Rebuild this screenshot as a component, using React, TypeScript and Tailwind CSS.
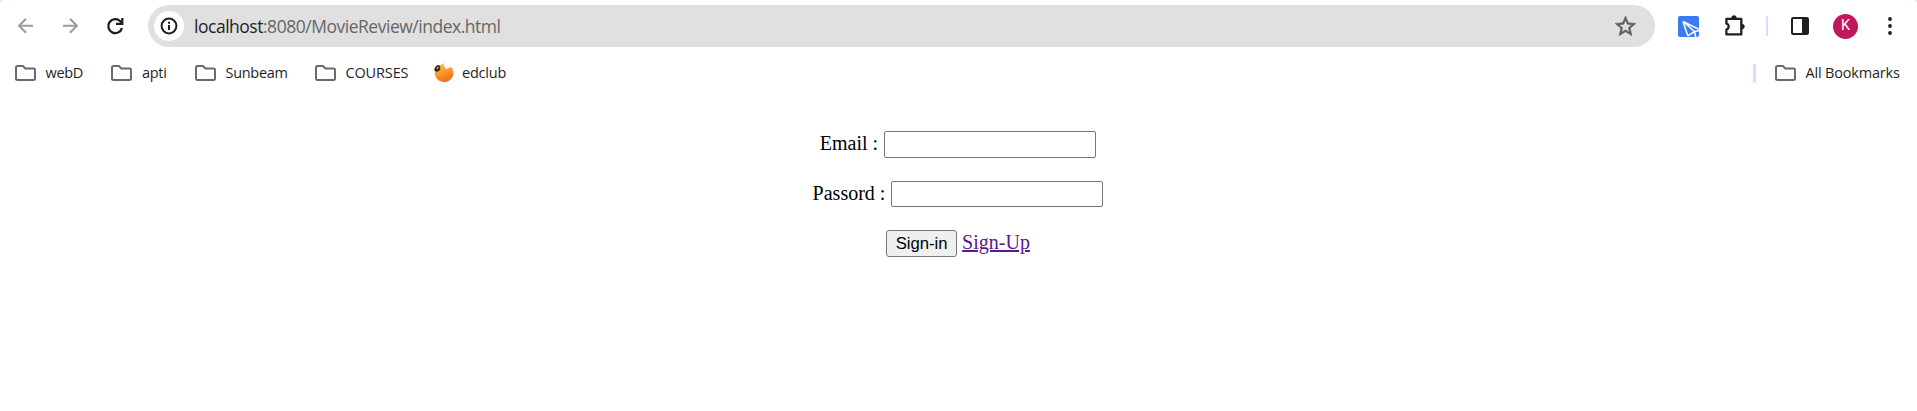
import type { ReactNode } from "react";

function FolderIcon() {
  return (
    <svg className="block h-4 w-[21px] shrink-0" viewBox="0 0 21 16" fill="none" stroke="#6a6a6d" strokeWidth="2" strokeLinejoin="round">
      <path d="M2.5 1H8l2.3 2.6h8.2A1.5 1.5 0 0 1 20 5.1v8.4a1.5 1.5 0 0 1-1.5 1.5h-16A1.5 1.5 0 0 1 1 13.5v-11A1.5 1.5 0 0 1 2.5 1Z" />
    </svg>
  );
}

function FoxIcon() {
  return (
    <svg className="block h-5 w-5 shrink-0" viewBox="0 0 20 20">
      <defs>
        <linearGradient id="fox" x1="0.2" y1="0" x2="0.6" y2="1">
          <stop offset="0" stopColor="#ffc247" />
          <stop offset="0.5" stopColor="#fb9a28" />
          <stop offset="1" stopColor="#ee6a20" />
        </linearGradient>
      </defs>
      <path d="M.2 6.5C1 3.5 3.6 1.9 6.4 2L10.4.2 9.6 3.2c1.2.4 1.6 1.200 1.800 2.300 1.700.6 3 .2 3.700-.8l.8-1.200.9 1.500 2-.2-.3 2.200 1 1.500c.3 6-3.700 10.600-9.300 10.600-5.400 0-9-3.600-9.600-9l.6-1.600Z" fill="url(#fox)" />
      <path d="M.3 7.2C.6 4.8 1.9 2.6 4 2.1c1.8.4 2.6 1.9 2.200 3.800C5.700 7.700 4 9 1.800 8.600Z" fill="#3d2814" />
      <path d="M2.700 4.500c1-.8 1.800-.5 1.900.5-.3.9-1.200 1-1.900.5Z" fill="#d8cba6" />
    </svg>
  );
}

function Bookmark({ className, icon, children }: { className: string; icon: ReactNode; children: ReactNode }) {
  return (
    <div className={`flex shrink-0 items-center whitespace-nowrap ${className}`}>
      {icon}
      {children}
    </div>
  );
}

function Toolbar() {
  return (
    <div className="flex h-[52px] items-center pl-[14px] text-[#1f1f1f]">
      <svg className="block h-6 w-6 shrink-0" viewBox="0 0 24 24" fill="none" stroke="#9b9b9b" strokeWidth="2">
        <path d="M19 11.7H5M12 4.7l-7 7 7 7" />
      </svg>
      <svg className="ml-[21px] block h-6 w-6 shrink-0" viewBox="0 0 24 24" fill="none" stroke="#9b9b9b" strokeWidth="2">
        <path d="M4 11.7h14M11 4.7l7 7-7 7" />
      </svg>
      <svg className="ml-[20px] block h-6 w-6 shrink-0" viewBox="0.5 0 24 24" fill="none" stroke="#1f1f22" strokeWidth="2.3">
        <path d="M19.500 14.100A7 7 0 1 1 17.800 7.200l1.700 1.900" />
        <path d="M19.800 4v5.800H13.500" />
      </svg>
      <div className="ml-[21px] flex h-[42px] w-[1507px] shrink-0 items-center rounded-full bg-[#e0e0e0] pl-[6px] pr-[17px]">
        <div className="flex h-[30px] w-[30px] items-center justify-center rounded-full bg-white">
          <svg className="block h-[18px] w-[18px]" viewBox="0 0 18 18" fill="none" stroke="#1f1f22" strokeWidth="2">
            <circle cx="9" cy="9" r="7.4" />
            <path d="M9 8v5M9 4.8v2" />
          </svg>
        </div>
        <div className="ml-[10px] whitespace-nowrap font-['Open_Sans',sans-serif] text-[17.5px] leading-6 tracking-[-0.48px] text-[#666]">
          <span className="text-[#1f1f1f]">localhost</span>:8080/MovieReview/index.html
        </div>
        <svg className="ml-auto block h-[25px] w-[25px]" viewBox="0 0.2 24 24" fill="#5f5f62">
          <path d="M22 9.240l-7.190-.62L12 2 9.190 8.630 2 9.240l5.460 4.730L5.820 21 12 17.270 18.180 21l-1.630-7.030L22 9.240zM12 15.400l-3.760 2.270 1-4.280-3.320-2.880 4.380-.38L12 6.100l1.710 4.040 4.380.38-3.320 2.880 1 4.280L12 15.400z" stroke="#5f5f62" strokeWidth="0.500" />
        </svg>
      </div>
      <svg className="ml-[23px] block h-[21px] w-[21px] shrink-0" viewBox="0 0 21 21">
        <rect width="21" height="21" rx="2" fill="#3d7bf0" />
        <path d="M5 5.500 21 13.300M5 5.500l4.800 14.300M5 5.500 16.500 15.500M9.800 19.800l6.700-4.300 4.500-.8M16.500 15.500l1.200 5.500" fill="none" stroke="#fff" strokeWidth="1.5" />
      </svg>
      <svg className="ml-[24px] block h-6 w-6 shrink-0" viewBox="0 0 24 24" fill="none" stroke="#1f1f22">
        <path d="M3.400 4.900h14.900v15.500H3.400v-4.700c3-1.100 3-5.100 0-6.200Z" strokeWidth="2.300" strokeLinejoin="round" />
        <path d="M8.600 4a2.400 2.400 0 0 1 4.800 0ZM19.100 10.200a2.400 2.400 0 0 1 0 4.800Z" fill="#1f1f22" strokeWidth="0.5" />
      </svg>
      <div className="ml-[19px] h-5 w-[2px] shrink-0 rounded-full bg-[#e5d5fd]" />
      <svg className="ml-[23px] block h-[18px] w-[18px] shrink-0" viewBox="0 0 18 18">
        <rect x="1" y="1" width="16" height="16" rx="1.2" fill="none" stroke="#1f1f22" strokeWidth="2" />
        <path d="M11 1h6v16h-6Z" fill="#1f1f22" />
      </svg>
      <div className="ml-[24px] flex h-[25px] w-[25px] shrink-0 items-center justify-center rounded-full bg-[#c2185b] font-['Roboto',sans-serif] text-[14.5px] leading-none text-white">
        K
      </div>
      <svg className="ml-[30px] block h-[18px] w-1 shrink-0" viewBox="0 0 4 18" fill="#1f1f22">
        <circle cx="2" cy="2" r="1.9" />
        <circle cx="2" cy="9" r="1.9" />
        <circle cx="2" cy="16" r="1.9" />
      </svg>
    </div>
  );
}

function BookmarksBar() {
  return (
    <div className="flex h-[42px] items-center pl-[15px] font-['Open_Sans',sans-serif] text-[14.5px] leading-5 text-[#1f1f1f]">
      <Bookmark className="w-24 gap-[9.5px] tracking-[-0.35px]" icon={<FolderIcon />}>webD</Bookmark>
      <Bookmark className="w-[84px] gap-[10px] tracking-[-0.3px]" icon={<FolderIcon />}>apti</Bookmark>
      <Bookmark className="w-[120px] gap-[9.5px] tracking-[-0.3px]" icon={<FolderIcon />}>Sunbeam</Bookmark>
      <Bookmark className="w-[119px] gap-[9.5px] tracking-[-0.15px]" icon={<FolderIcon />}>COURSES</Bookmark>
      <Bookmark className="gap-2 tracking-[-0.2px]" icon={<FoxIcon />}>edclub</Bookmark>
      <div className="ml-auto h-[19px] w-[3px] shrink-0 rounded-full bg-[#e5d5fd]" />
      <Bookmark className="ml-[19px] w-[142px] gap-[9.5px] tracking-[-0.18px]" icon={<FolderIcon />}>All Bookmarks</Bookmark>
    </div>
  );
}

function SignInForm() {
  return (
    <form className="flex flex-col pr-px pt-[37px] font-['Liberation_Serif',serif] text-[20px] leading-[24px] text-black" onSubmit={(e) => e.preventDefault()}>
      <label className="flex h-[27px] justify-center">
        <span className="mr-[6px]">Email :</span>
        <input type="email" className="h-[27px] w-[212px] rounded-[2px] border border-[#767676] bg-white px-1 outline-none" />
      </label>
      <label className="mt-[23px] flex h-[26px] justify-center">
        <span className="mr-[6px]">Passord :</span>
        <input type="password" className="h-[26px] w-[212px] rounded-[2px] border border-[#767676] bg-white px-1 outline-none" />
      </label>
      <div className="mt-[23px] flex h-[27px] justify-center gap-[5px]">
        <button type="submit" className="h-[27px] w-[71px] rounded-[3px] border border-[#767676] bg-[#efefef] font-['Liberation_Sans',sans-serif] text-[16.67px] leading-[22px]">
          Sign-in
        </button>
        <a href="#" className="text-[#551a8b] underline">Sign-Up</a>
      </div>
    </form>
  );
}

export default function App() {
  return (
    <div className="h-[411px] w-[1917px] overflow-hidden bg-[#e5d5fd]">
      <div className="h-full rounded-t-[4px] bg-white">
        <Toolbar />
        <BookmarksBar />
        <SignInForm />
      </div>
    </div>
  );
}
